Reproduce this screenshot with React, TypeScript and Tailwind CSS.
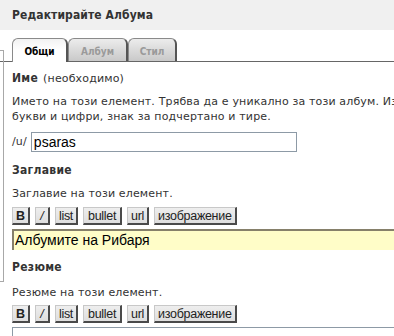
const tools = ["B", "i", "list", "bullet", "url", "изображение"];

function Toolbar() {
  return (
    <div className="flex gap-[5px]">
      {tools.map((t) => (
        <button
          key={t}
          type="button"
          className={
            "h-[18px] border-t border-l border-[#c8c8c8] border-r-2 border-b-2 border-r-[#4a4a4a] border-b-[#4a4a4a] bg-gradient-to-b from-[#eeeeee] to-[#dedede] font-['Liberation_Sans',sans-serif] text-[12.5px] leading-[14px] tracking-[-0.3px] text-[#222] " +
            (t === "B" ? "px-[3px] font-bold" : t === "i" ? "px-[4.5px]" : t === "bullet" ? "px-[4px]" : "px-[3px]")
          }
        >
          {t === "i" ? <span className="italic">/</span> : t}
        </button>
      ))}
    </div>
  );
}

function Tab({ label, active }: { label: string; active?: boolean }) {
  return active ? (
    <div className="relative -mb-px flex h-[24px] w-[56px] items-center justify-center rounded-t-[6px] border border-r-2 border-b-0 border-[#8a8a8a] border-r-[#555] bg-gradient-to-b from-[#f2f2f2] via-white to-white pt-[2px] font-['DejaVu_Sans_Condensed','DejaVu_Sans',sans-serif] text-[10px] font-bold text-black">
      {label}
    </div>
  ) : (
    <div className="flex h-[23px] items-center justify-center rounded-t-[6px] border border-r-2 border-b-0 border-[#8a8a8a] border-r-[#555] bg-gradient-to-b from-[#ececec] to-[#c9c9c9] pt-[2px] font-['DejaVu_Sans_Condensed','DejaVu_Sans',sans-serif] text-[10px] font-bold text-[#9a9a9a]">
      {label}
    </div>
  );
}

function Heading({ children, className }: { children: React.ReactNode; className?: string }) {
  return (
    <div className={"h-4 font-['DejaVu_Sans_Condensed','DejaVu_Sans',sans-serif] text-[12px] font-bold leading-4 tracking-[0.3px] text-[#333] " + (className ?? "")}>
      {children}
    </div>
  );
}

export default function App() {
  return (
    <div className="relative h-[336px] w-[394px] overflow-hidden bg-white font-['DejaVu_Sans',Verdana,sans-serif] text-[#333]">
      <div className="absolute top-[50px] left-[-10px] h-[232px] w-[14px] border border-[#a8a8a8]" />

      <div className="flex h-[30px] items-center bg-[#f0f0f0] pl-3 font-['DejaVu_Sans_Condensed','DejaVu_Sans',sans-serif] text-[12px] font-bold tracking-[0.1px] text-[#333]">
        Редактирайте Албума
      </div>

      <div className="mt-2 flex w-[520px] items-end border-b border-[#666] pl-3">
        <Tab label="Общи" active />
        <div className="w-[60px]">
          <Tab label="Албум" />
        </div>
        <div className="w-[49px]">
          <Tab label="Стил" />
        </div>
      </div>

      <div className="w-[600px] pl-3 tracking-[0.15px]">
        <div className="mt-2 flex h-4 items-baseline gap-[5px] leading-4">
          <span className="font-['DejaVu_Sans_Condensed','DejaVu_Sans',sans-serif] text-[12px] font-bold tracking-[0.3px]">Име</span>
          <span className="text-[11px]">(необходимо)</span>
        </div>
        <div className="mt-2 text-[11px] leading-[15px] whitespace-nowrap">
          <p>Името на този елемент. Трябва да е уникално за този албум. Използвайте само</p>
          <p>букви и цифри, знак за подчертано и тире.</p>
        </div>
        <div className="mt-[8px] flex items-center gap-[4px]">
          <span className="text-[11px]">/u/</span>
          <div className="flex h-[20px] w-[266px] items-center border border-[#8d9aa6] px-[2px] font-['Liberation_Sans',sans-serif] text-[14px] tracking-normal text-black">
            psaras
          </div>
        </div>

        <Heading className="mt-[10px]">Заглавие</Heading>
        <p className="mt-[8px] text-[11px] leading-[15px]">Заглавие на този елемент.</p>
        <div className="mt-[6px]">
          <Toolbar />
        </div>
        <div className="mt-[4px] flex h-[21px] items-center border-t-2 border-l-2 border-[#86806a] bg-[#fffdc8] pl-[1px] font-['Liberation_Sans',sans-serif] text-[14px] tracking-normal text-black">
          Албумите на Рибаря
        </div>

        <Heading className="mt-[9px]">Резюме</Heading>
        <p className="mt-[10px] text-[11px] leading-[15px]">Резюме на този елемент.</p>
        <div className="mt-[5px]">
          <Toolbar />
        </div>
        <div className="mt-[4px] h-[40px] border-t border-l border-[#8d9aa6]" />
      </div>
    </div>
  );
}
